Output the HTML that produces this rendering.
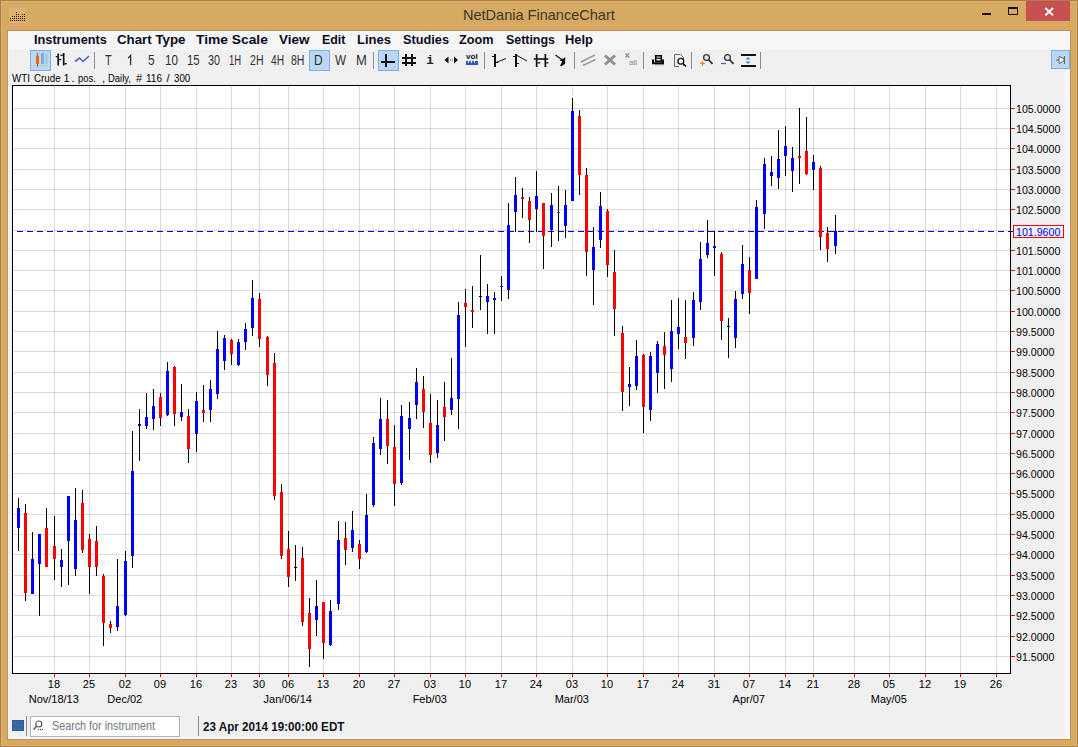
<!DOCTYPE html>
<html><head><meta charset="utf-8"><title>NetDania FinanceChart</title>
<style>
html,body{margin:0;padding:0}
body{width:1078px;height:747px;position:relative;overflow:hidden;background:#D6AA63;font-family:"Liberation Sans",sans-serif;}
.a{position:absolute}
.t{position:absolute;white-space:nowrap;line-height:1;transform-origin:0 0}
.menu{font-weight:bold;font-size:13px;color:#0b0b1f;top:33px}
.tb{font-size:14px;color:#303030;top:53px}
.ax{font-size:11px;color:#000}
.sep{position:absolute;width:1px;background:#8c8c8c;top:52px;height:17px}
.sel{position:absolute;box-sizing:border-box;background:#b9d7f6;border:1px solid #7eb0e6}
</style></head><body>

<div class="a" style="left:0;top:0;width:1078px;height:747px;box-sizing:border-box;border:1px solid #ab7f47"></div>
<div class="a" style="left:1px;top:1px;width:1076px;height:745px;box-sizing:border-box;border:1px solid #dcb171"></div>
<div class="a" style="left:8px;top:31px;width:1062px;height:708px;background:#F0F0F0"></div>
<div class="a" style="left:8px;top:31px;width:1062px;height:19px;background:#F6F6F6"></div>
<div class="a" style="left:1065px;top:31px;width:5px;height:708px;background:#f5f4fa"></div>
<div class="a" style="left:8px;top:736px;width:1062px;height:3px;background:#f4f4f9"></div>
<div class="a" style="left:8px;top:50px;width:1px;height:689px;background:#f6f7fb"></div>
<div class="a" style="left:7px;top:30px;width:1064px;height:710px;box-sizing:border-box;border:1px solid #bd9460"></div>
<div class="a" style="left:8px;top:27px;width:1062px;height:3px;background:#e0a45c"></div>
<svg class="a" style="left:8px;top:8px" width="26" height="16" viewBox="0 0 26 16" shape-rendering="crispEdges">
<rect x="1" y="0" width="16" height="15" fill="#e3c23c" opacity="0.5"></rect><rect x="17" y="0" width="6" height="15" fill="#e8b060" opacity="0.35"></rect>
<rect x="2" y="0" width="1" height="1" fill="#e2a6e2"></rect>
<rect x="4" y="0" width="1" height="1" fill="#e2a6e2"></rect>
<rect x="6" y="0" width="1" height="1" fill="#e2a6e2"></rect>
<rect x="8" y="0" width="1" height="1" fill="#e2a6e2"></rect>
<rect x="10" y="0" width="1" height="1" fill="#e2a6e2"></rect>
<rect x="12" y="0" width="1" height="1" fill="#e2a6e2"></rect>
<rect x="14" y="0" width="1" height="1" fill="#e2a6e2"></rect>
<rect x="16" y="0" width="1" height="1" fill="#e2a6e2"></rect>
<rect x="2" y="2" width="1" height="1" fill="#e2a6e2"></rect>
<rect x="4" y="2" width="1" height="1" fill="#e2a6e2"></rect>
<rect x="6" y="2" width="1" height="1" fill="#e2a6e2"></rect>
<rect x="8" y="2" width="1" height="1" fill="#e2a6e2"></rect>
<rect x="10" y="2" width="1" height="1" fill="#e2a6e2"></rect>
<rect x="12" y="2" width="1" height="1" fill="#e2a6e2"></rect>
<rect x="14" y="2" width="1" height="1" fill="#e2a6e2"></rect>
<rect x="16" y="2" width="1" height="1" fill="#e2a6e2"></rect>
<rect x="2" y="4" width="1" height="1" fill="#e2a6e2"></rect>
<rect x="4" y="4" width="1" height="1" fill="#e2a6e2"></rect>
<rect x="6" y="4" width="1" height="1" fill="#e2a6e2"></rect>
<rect x="8" y="4" width="1" height="1" fill="#2a0838"></rect>
<rect x="10" y="4" width="1" height="1" fill="#e2a6e2"></rect>
<rect x="12" y="4" width="1" height="1" fill="#e2a6e2"></rect>
<rect x="14" y="4" width="1" height="1" fill="#e2a6e2"></rect>
<rect x="16" y="4" width="1" height="1" fill="#e2a6e2"></rect>
<rect x="2" y="6" width="1" height="1" fill="#e2a6e2"></rect>
<rect x="4" y="6" width="1" height="1" fill="#e2a6e2"></rect>
<rect x="6" y="6" width="1" height="1" fill="#e2a6e2"></rect>
<rect x="8" y="6" width="1" height="1" fill="#2a0838"></rect>
<rect x="10" y="6" width="1" height="1" fill="#2a0838"></rect>
<rect x="12" y="6" width="1" height="1" fill="#e2a6e2"></rect>
<rect x="14" y="6" width="1" height="1" fill="#2a0838"></rect>
<rect x="16" y="6" width="1" height="1" fill="#2a0838"></rect>
<rect x="2" y="8" width="1" height="1" fill="#e2a6e2"></rect>
<rect x="4" y="8" width="1" height="1" fill="#2a0838"></rect>
<rect x="6" y="8" width="1" height="1" fill="#2a0838"></rect>
<rect x="8" y="8" width="1" height="1" fill="#2a0838"></rect>
<rect x="10" y="8" width="1" height="1" fill="#2a0838"></rect>
<rect x="12" y="8" width="1" height="1" fill="#2a0838"></rect>
<rect x="14" y="8" width="1" height="1" fill="#2a0838"></rect>
<rect x="16" y="8" width="1" height="1" fill="#2a0838"></rect>
<rect x="2" y="10" width="1" height="1" fill="#2a0838"></rect>
<rect x="4" y="10" width="1" height="1" fill="#2a0838"></rect>
<rect x="6" y="10" width="1" height="1" fill="#2a0838"></rect>
<rect x="8" y="10" width="1" height="1" fill="#2a0838"></rect>
<rect x="10" y="10" width="1" height="1" fill="#2a0838"></rect>
<rect x="12" y="10" width="1" height="1" fill="#2a0838"></rect>
<rect x="14" y="10" width="1" height="1" fill="#2a0838"></rect>
<rect x="16" y="10" width="1" height="1" fill="#2a0838"></rect>
<rect x="2" y="12" width="1" height="1" fill="#2a0838"></rect>
<rect x="4" y="12" width="1" height="1" fill="#2a0838"></rect>
<rect x="6" y="12" width="1" height="1" fill="#2a0838"></rect>
<rect x="8" y="12" width="1" height="1" fill="#2a0838"></rect>
<rect x="10" y="12" width="1" height="1" fill="#2a0838"></rect>
<rect x="12" y="12" width="1" height="1" fill="#2a0838"></rect>
<rect x="14" y="12" width="1" height="1" fill="#2a0838"></rect>
<rect x="16" y="12" width="1" height="1" fill="#2a0838"></rect>
<rect x="2" y="14" width="1" height="1" fill="#e2a6e2"></rect>
<rect x="4" y="14" width="1" height="1" fill="#e2a6e2"></rect>
<rect x="6" y="14" width="1" height="1" fill="#e2a6e2"></rect>
<rect x="8" y="14" width="1" height="1" fill="#e2a6e2"></rect>
<rect x="10" y="14" width="1" height="1" fill="#e2a6e2"></rect>
<rect x="12" y="14" width="1" height="1" fill="#e2a6e2"></rect>
<rect x="14" y="14" width="1" height="1" fill="#e2a6e2"></rect>
<rect x="16" y="14" width="1" height="1" fill="#e2a6e2"></rect>
</svg>
<div class="t" style="left: 462.73px; top: 7px; font-size: 15px; color: rgb(61, 53, 42); transform: scaleX(0.9682);">NetDania FinanceChart</div>
<div class="a" style="left:982px;top:13px;width:9px;height:2px;background:#1a1208"></div>
<div class="a" style="left:1008px;top:7px;width:10px;height:8px;box-sizing:border-box;border:1px solid #1a1208;border-top-width:2px"></div>
<div class="a" style="left:1026px;top:1px;width:44px;height:20px;background:#c75050"></div>
<svg class="a" style="left:1041px;top:5px" width="16" height="13" viewBox="0 0 16 13"><path d="M4.4 3 L12 10.4 M12 3 L4.4 10.4" stroke="#fff" stroke-width="2" fill="none"></path></svg>
<div class="t menu" style="left: 33.7px; transform: scaleX(0.9788);">Instruments</div>
<div class="t menu" style="left: 116.9px; transform: scaleX(1.0224);">Chart Type</div>
<div class="t menu" style="left: 195.5px; transform: scaleX(1.0613);">Time Scale</div>
<div class="t menu" style="left: 279.2px; transform: scaleX(1.0338);">View</div>
<div class="t menu" style="left: 321.9px; transform: scaleX(0.9555);">Edit</div>
<div class="t menu" style="left: 356.9px; transform: scaleX(0.9993);">Lines</div>
<div class="t menu" style="left: 402.7px; transform: scaleX(0.9802);">Studies</div>
<div class="t menu" style="left: 458.9px; transform: scaleX(0.9764);">Zoom</div>
<div class="t menu" style="left: 505.5px; transform: scaleX(0.9539);">Settings</div>
<div class="t menu" style="left: 565px; transform: scaleX(0.9883);">Help</div>
<div class="sel" style="left:30px;top:50px;width:21px;height:21px"></div>
<div class="sel" style="left:309px;top:50px;width:21px;height:21px"></div>
<div class="sel" style="left:378px;top:50px;width:21px;height:21px"></div>
<div class="sel" style="left:1051px;top:50px;width:19px;height:19px"></div>
<div class="sep" style="left:94px"></div>
<div class="sep" style="left:373px"></div>
<div class="sep" style="left:484px"></div>
<div class="sep" style="left:574px"></div>
<div class="sep" style="left:643px"></div>
<div class="sep" style="left:691px"></div>
<div class="sep" style="left:760px"></div>
<div class="t tb" style="left: 104.8px; transform: scaleX(0.7889);">T</div>
<div class="t tb" style="left: 147.7px; transform: scaleX(0.85);">5</div>
<div class="t tb" style="left: 165.17px; transform: scaleX(0.8319);">10</div>
<div class="t tb" style="left: 186.59px; transform: scaleX(0.8116);">15</div>
<div class="t tb" style="left: 207.8px; transform: scaleX(0.7728);">30</div>
<div class="t tb" style="left: 228.52px; transform: scaleX(0.6778);">1H</div>
<div class="t tb" style="left: 249.6px; transform: scaleX(0.7566);">2H</div>
<div class="t tb" style="left: 270.5px; transform: scaleX(0.7327);">4H</div>
<div class="t tb" style="left: 291.4px; transform: scaleX(0.7506);">8H</div>
<div class="t tb" style="left: 314.44px; transform: scaleX(0.8556);">D</div>
<div class="t tb" style="left: 334.7px; transform: scaleX(0.8357);">W</div>
<div class="t tb" style="left: 356.07px; transform: scaleX(0.93);">M</div>
<svg class="a" style="left:0;top:46px" width="1078" height="30" viewBox="0 46 1078 30">
<g shape-rendering="crispEdges"><rect x="37" y="53" width="1" height="14" fill="#c8400a"></rect><rect x="36" y="56" width="3" height="8" fill="#ff6000"></rect><rect x="41" y="53" width="3" height="11" fill="#86a9d3"></rect><rect x="45" y="54" width="3" height="10" fill="#a9c6ea"></rect><rect x="39" y="65" width="9" height="1" fill="#a8d0c0"></rect></g><g fill="#111"><rect x="57.4" y="53.5" width="1.6" height="12"></rect><rect x="55.8" y="56" width="2" height="1.2"></rect><rect x="59" y="59" width="2.2" height="1.2"></rect><rect x="62.9" y="53" width="1.6" height="12.5"></rect><rect x="60.4" y="54.6" width="2.6" height="1.2"></rect><rect x="64.4" y="63" width="2.3" height="1.4"></rect></g><path d="M75 61.5 L79.5 58 L83 61.5 L89 56" stroke="#4a63c0" stroke-width="1.6" fill="none"></path><path d="M128.2 58 L130.6 55.4 L130.6 65" stroke="#303030" stroke-width="1.3" fill="none" stroke-linejoin="miter"></path><g shape-rendering="crispEdges" fill="#111"><rect x="385" y="54" width="2" height="13"></rect><rect x="381" y="61" width="14" height="2"></rect></g><g shape-rendering="crispEdges" fill="#111"><rect x="405" y="54" width="2" height="12"></rect><rect x="411" y="54" width="2" height="12"></rect><rect x="402" y="57" width="14" height="2"></rect><rect x="402" y="62" width="14" height="2"></rect></g><path d="M444.5 60 L448.5 56.5 L448.5 63.5 Z M458 60 L454 56.5 L454 63.5 Z" fill="#111"></path><rect x="450" y="59.5" width="1" height="1" fill="#555"></rect><rect x="452" y="59.5" width="1" height="1" fill="#555"></rect><g shape-rendering="crispEdges"><rect x="466" y="61" width="12" height="4" fill="#2f55b5"></rect><rect x="468" y="61" width="1" height="2" fill="#dfe8ff"></rect><rect x="471" y="61" width="1" height="2" fill="#dfe8ff"></rect><rect x="474" y="61" width="1" height="2" fill="#dfe8ff"></rect></g><g shape-rendering="crispEdges" fill="#111"><rect x="494" y="54" width="2" height="13"></rect><rect x="492" y="56" width="2" height="1"></rect><rect x="496" y="62" width="2" height="1"></rect></g><path d="M496 62.5 L506 58.5" stroke="#111" stroke-width="1"></path><g shape-rendering="crispEdges" fill="#111"><rect x="515" y="54" width="2" height="13"></rect><rect x="513" y="56" width="2" height="1"></rect><rect x="517" y="63" width="2" height="1"></rect></g><path d="M517 55.5 L527 61" stroke="#111" stroke-width="1"></path><g fill="#111"><rect x="535.8" y="54" width="1.7" height="13"></rect><rect x="544.5" y="54" width="1.7" height="13"></rect><rect x="533.8" y="58.2" width="14.4" height="1.6"></rect><rect x="537.5" y="62.2" width="2.7" height="1.3"></rect><rect x="546.2" y="62.2" width="2.2" height="1.3"></rect></g><path d="M555.5 55 L563 60.5" stroke="#111" stroke-width="1.2"></path><path d="M565.3 57.2 L565 63.8 L561.5 66.3 L560 65.5 L562.3 61.5 L559.5 60.2 Z" fill="#111"></path><path d="M581 62 L595 55 M583 65.5 L595.5 59.5" stroke="#9a9a9a" stroke-width="1.4"></path><path d="M605 55.5 L615 64.5 M615 55.5 L605 64.5" stroke="#8f8f8f" stroke-width="3"></path><path d="M625.5 53.5 L629 57.5 M629 53.5 L625.5 57.5" stroke="#8f8f8f" stroke-width="1.3"></path><g><rect x="655.7" y="55.8" width="5.6" height="5.4" fill="#f4f4f4" stroke="#000" stroke-width="1.5"></rect><rect x="656" y="57.6" width="5" height="1.2" fill="#000"></rect><path d="M653 59.5 L653 63.2 L663 63.2 L663 59.5" fill="none" stroke="#000" stroke-width="2"></path><rect x="655" y="64.3" width="9" height="1" fill="#4a6aa8" opacity=".7"></rect></g><path d="M674.5 54.5 L680.5 54.5 L683.5 57.5 L683.5 66 M674.5 54.5 L674.5 66.5 L679 66.5" fill="none" stroke="#666" stroke-width="1"></path><circle cx="680.8" cy="61.2" r="2.9" fill="#fff" stroke="#111" stroke-width="1.3"></circle><path d="M683 63.5 L686 66.5" stroke="#111" stroke-width="1.6"></path><circle cx="706.5" cy="57.5" r="2.9" fill="#e8e8e8" stroke="#333" stroke-width="1.3"></circle><path d="M708.7 59.8 L712.5 63.8" stroke="#333" stroke-width="1.7"></path><path d="M700 63.5 L705 63.5 M702.5 61 L702.5 66" stroke="#ff7a00" stroke-width="1.2"></path><circle cx="727.5" cy="57.5" r="2.9" fill="#e8e8e8" stroke="#333" stroke-width="1.3"></circle><path d="M729.7 59.8 L733.5 63.8" stroke="#333" stroke-width="1.7"></path><path d="M721 63.5 L726 63.5" stroke="#3a66c8" stroke-width="1.2"></path><g shape-rendering="crispEdges" fill="#111"><rect x="741" y="54" width="15" height="2"></rect><rect x="741" y="65" width="15" height="2"></rect></g><path d="M748 57 L750.5 59.5 L745.5 59.5 Z M748 64 L750.5 61.5 L745.5 61.5 Z" fill="#4a7fd0"></path><path d="M1056 60 L1059 60 M1059 56.5 L1059 63.5 L1064 61 L1064 58.5 Z M1064.5 56 L1064.5 64" fill="#f4f4f4" stroke="#666" stroke-width="1"></path>
</svg>
<div class="t" style="left:426.3px;top:55px;font-family:'Liberation Mono',monospace;font-size:12.5px;font-weight:bold;color:#222">i</div>
<div class="t" style="left: 466.4px; top: 53.2px; font-size: 7.5px; color: rgb(17, 17, 17); font-weight: bold; transform: scaleX(1.0974);">vol</div>
<div class="t" style="left: 629.2px; top: 58.8px; font-size: 7.5px; color: rgb(138, 138, 138); transform: scaleX(1.0845);">all</div>
<div class="t" style="left: 12.1px; top: 73px; font-size: 11px; color: rgb(0, 0, 0); transform: scaleX(0.8855);">WTI</div>
<div class="t" style="left: 34px; top: 73px; font-size: 11px; color: rgb(0, 0, 0); transform: scaleX(0.888);">Crude</div>
<div class="t" style="left:63.6px;top:73px;font-size:11px;color:#000">1</div>
<div class="t" style="left: 71.6px; top: 73px; font-size: 11px; color: rgb(0, 0, 0);">.</div>
<div class="t" style="left: 77.6px; top: 73px; font-size: 11px; color: rgb(0, 0, 0); transform: scaleX(0.8488);">pos.</div>
<div class="t" style="left:102.0px;top:73px;font-size:11px;color:#000">,</div>
<div class="t" style="left: 107.6px; top: 73px; font-size: 11px; color: rgb(0, 0, 0); transform: scaleX(0.8598);">Daily,</div>
<div class="t" style="left:136.0px;top:73px;font-size:11px;color:#000">#</div>
<div class="t" style="left: 146.4px; top: 73px; font-size: 11px; color: rgb(0, 0, 0); transform: scaleX(0.9185);">116</div>
<div class="t" style="left:166.6px;top:73px;font-size:11px;color:#000">/</div>
<div class="t" style="left: 174px; top: 73px; font-size: 11px; color: rgb(0, 0, 0); transform: scaleX(0.8884);">300</div>
<svg class="a" style="left:0;top:80px" width="1078" height="600" viewBox="0 80 1078 600" shape-rendering="crispEdges">
<rect x="12" y="85" width="999" height="589" fill="#000"></rect><rect x="13" y="86" width="997" height="587" fill="#fff"></rect>
<rect x="54" y="86" width="1" height="587" fill="#000" fill-opacity=".14"></rect><rect x="54" y="674" width="1" height="3" fill="#f00"></rect><rect x="89" y="86" width="1" height="587" fill="#000" fill-opacity=".14"></rect><rect x="89" y="674" width="1" height="3" fill="#f00"></rect><rect x="125" y="86" width="1" height="587" fill="#000" fill-opacity=".14"></rect><rect x="125" y="674" width="1" height="3" fill="#f00"></rect><rect x="160" y="86" width="1" height="587" fill="#000" fill-opacity=".14"></rect><rect x="160" y="674" width="1" height="3" fill="#f00"></rect><rect x="196" y="86" width="1" height="587" fill="#000" fill-opacity=".14"></rect><rect x="196" y="674" width="1" height="3" fill="#f00"></rect><rect x="231" y="86" width="1" height="587" fill="#000" fill-opacity=".14"></rect><rect x="231" y="674" width="1" height="3" fill="#f00"></rect><rect x="259" y="86" width="1" height="587" fill="#000" fill-opacity=".14"></rect><rect x="259" y="674" width="1" height="3" fill="#f00"></rect><rect x="288" y="86" width="1" height="587" fill="#000" fill-opacity=".14"></rect><rect x="288" y="674" width="1" height="3" fill="#f00"></rect><rect x="323" y="86" width="1" height="587" fill="#000" fill-opacity=".14"></rect><rect x="323" y="674" width="1" height="3" fill="#f00"></rect><rect x="359" y="86" width="1" height="587" fill="#000" fill-opacity=".14"></rect><rect x="359" y="674" width="1" height="3" fill="#f00"></rect><rect x="394" y="86" width="1" height="587" fill="#000" fill-opacity=".14"></rect><rect x="394" y="674" width="1" height="3" fill="#f00"></rect><rect x="430" y="86" width="1" height="587" fill="#000" fill-opacity=".14"></rect><rect x="430" y="674" width="1" height="3" fill="#f00"></rect><rect x="465" y="86" width="1" height="587" fill="#000" fill-opacity=".14"></rect><rect x="465" y="674" width="1" height="3" fill="#f00"></rect><rect x="501" y="86" width="1" height="587" fill="#000" fill-opacity=".14"></rect><rect x="501" y="674" width="1" height="3" fill="#f00"></rect><rect x="536" y="86" width="1" height="587" fill="#000" fill-opacity=".14"></rect><rect x="536" y="674" width="1" height="3" fill="#f00"></rect><rect x="572" y="86" width="1" height="587" fill="#000" fill-opacity=".14"></rect><rect x="572" y="674" width="1" height="3" fill="#f00"></rect><rect x="607" y="86" width="1" height="587" fill="#000" fill-opacity=".14"></rect><rect x="607" y="674" width="1" height="3" fill="#f00"></rect><rect x="643" y="86" width="1" height="587" fill="#000" fill-opacity=".14"></rect><rect x="643" y="674" width="1" height="3" fill="#f00"></rect><rect x="678" y="86" width="1" height="587" fill="#000" fill-opacity=".14"></rect><rect x="678" y="674" width="1" height="3" fill="#f00"></rect><rect x="714" y="86" width="1" height="587" fill="#000" fill-opacity=".14"></rect><rect x="714" y="674" width="1" height="3" fill="#f00"></rect><rect x="749" y="86" width="1" height="587" fill="#000" fill-opacity=".14"></rect><rect x="749" y="674" width="1" height="3" fill="#f00"></rect><rect x="785" y="86" width="1" height="587" fill="#000" fill-opacity=".14"></rect><rect x="785" y="674" width="1" height="3" fill="#f00"></rect><rect x="813" y="86" width="1" height="587" fill="#000" fill-opacity=".14"></rect><rect x="813" y="674" width="1" height="3" fill="#f00"></rect><rect x="854" y="86" width="1" height="587" fill="#000" fill-opacity=".14"></rect><rect x="854" y="674" width="1" height="3" fill="#f00"></rect><rect x="889" y="86" width="1" height="587" fill="#000" fill-opacity=".14"></rect><rect x="889" y="674" width="1" height="3" fill="#f00"></rect><rect x="925" y="86" width="1" height="587" fill="#000" fill-opacity=".14"></rect><rect x="925" y="674" width="1" height="3" fill="#f00"></rect><rect x="960" y="86" width="1" height="587" fill="#000" fill-opacity=".14"></rect><rect x="960" y="674" width="1" height="3" fill="#f00"></rect><rect x="996" y="86" width="1" height="587" fill="#000" fill-opacity=".14"></rect><rect x="996" y="674" width="1" height="3" fill="#f00"></rect><rect x="13" y="108" width="997" height="1" fill="#000" fill-opacity=".14"></rect><rect x="1011" y="108" width="4" height="1" fill="#f00"></rect><rect x="13" y="128" width="997" height="1" fill="#000" fill-opacity=".14"></rect><rect x="1011" y="128" width="4" height="1" fill="#f00"></rect><rect x="13" y="148" width="997" height="1" fill="#000" fill-opacity=".14"></rect><rect x="1011" y="148" width="4" height="1" fill="#f00"></rect><rect x="13" y="169" width="997" height="1" fill="#000" fill-opacity=".14"></rect><rect x="1011" y="169" width="4" height="1" fill="#f00"></rect><rect x="13" y="189" width="997" height="1" fill="#000" fill-opacity=".14"></rect><rect x="1011" y="189" width="4" height="1" fill="#f00"></rect><rect x="13" y="209" width="997" height="1" fill="#000" fill-opacity=".14"></rect><rect x="1011" y="209" width="4" height="1" fill="#f00"></rect><rect x="13" y="230" width="997" height="1" fill="#000" fill-opacity=".14"></rect><rect x="13" y="250" width="997" height="1" fill="#000" fill-opacity=".14"></rect><rect x="1011" y="250" width="4" height="1" fill="#f00"></rect><rect x="13" y="270" width="997" height="1" fill="#000" fill-opacity=".14"></rect><rect x="1011" y="270" width="4" height="1" fill="#f00"></rect><rect x="13" y="290" width="997" height="1" fill="#000" fill-opacity=".14"></rect><rect x="1011" y="290" width="4" height="1" fill="#f00"></rect><rect x="13" y="311" width="997" height="1" fill="#000" fill-opacity=".14"></rect><rect x="1011" y="311" width="4" height="1" fill="#f00"></rect><rect x="13" y="331" width="997" height="1" fill="#000" fill-opacity=".14"></rect><rect x="1011" y="331" width="4" height="1" fill="#f00"></rect><rect x="13" y="351" width="997" height="1" fill="#000" fill-opacity=".14"></rect><rect x="1011" y="351" width="4" height="1" fill="#f00"></rect><rect x="13" y="372" width="997" height="1" fill="#000" fill-opacity=".14"></rect><rect x="1011" y="372" width="4" height="1" fill="#f00"></rect><rect x="13" y="392" width="997" height="1" fill="#000" fill-opacity=".14"></rect><rect x="1011" y="392" width="4" height="1" fill="#f00"></rect><rect x="13" y="412" width="997" height="1" fill="#000" fill-opacity=".14"></rect><rect x="1011" y="412" width="4" height="1" fill="#f00"></rect><rect x="13" y="433" width="997" height="1" fill="#000" fill-opacity=".14"></rect><rect x="1011" y="433" width="4" height="1" fill="#f00"></rect><rect x="13" y="453" width="997" height="1" fill="#000" fill-opacity=".14"></rect><rect x="1011" y="453" width="4" height="1" fill="#f00"></rect><rect x="13" y="473" width="997" height="1" fill="#000" fill-opacity=".14"></rect><rect x="1011" y="473" width="4" height="1" fill="#f00"></rect><rect x="13" y="493" width="997" height="1" fill="#000" fill-opacity=".14"></rect><rect x="1011" y="493" width="4" height="1" fill="#f00"></rect><rect x="13" y="514" width="997" height="1" fill="#000" fill-opacity=".14"></rect><rect x="1011" y="514" width="4" height="1" fill="#f00"></rect><rect x="13" y="534" width="997" height="1" fill="#000" fill-opacity=".14"></rect><rect x="1011" y="534" width="4" height="1" fill="#f00"></rect><rect x="13" y="554" width="997" height="1" fill="#000" fill-opacity=".14"></rect><rect x="1011" y="554" width="4" height="1" fill="#f00"></rect><rect x="13" y="575" width="997" height="1" fill="#000" fill-opacity=".14"></rect><rect x="1011" y="575" width="4" height="1" fill="#f00"></rect><rect x="13" y="595" width="997" height="1" fill="#000" fill-opacity=".14"></rect><rect x="1011" y="595" width="4" height="1" fill="#f00"></rect><rect x="13" y="615" width="997" height="1" fill="#000" fill-opacity=".14"></rect><rect x="1011" y="615" width="4" height="1" fill="#f00"></rect><rect x="13" y="636" width="997" height="1" fill="#000" fill-opacity=".14"></rect><rect x="1011" y="636" width="4" height="1" fill="#f00"></rect><rect x="13" y="656" width="997" height="1" fill="#000" fill-opacity=".14"></rect><rect x="1011" y="656" width="4" height="1" fill="#f00"></rect><rect x="17" y="231" width="6" height="1" fill="#0000ff"></rect><rect x="27" y="231" width="6" height="1" fill="#0000ff"></rect><rect x="37" y="231" width="6" height="1" fill="#0000ff"></rect><rect x="47" y="231" width="6" height="1" fill="#0000ff"></rect><rect x="57" y="231" width="6" height="1" fill="#0000ff"></rect><rect x="67" y="231" width="6" height="1" fill="#0000ff"></rect><rect x="77" y="231" width="6" height="1" fill="#0000ff"></rect><rect x="87" y="231" width="6" height="1" fill="#0000ff"></rect><rect x="97" y="231" width="6" height="1" fill="#0000ff"></rect><rect x="107" y="231" width="6" height="1" fill="#0000ff"></rect><rect x="117" y="231" width="6" height="1" fill="#0000ff"></rect><rect x="127" y="231" width="6" height="1" fill="#0000ff"></rect><rect x="137" y="231" width="6" height="1" fill="#0000ff"></rect><rect x="147" y="231" width="6" height="1" fill="#0000ff"></rect><rect x="157" y="231" width="6" height="1" fill="#0000ff"></rect><rect x="167" y="231" width="6" height="1" fill="#0000ff"></rect><rect x="177" y="231" width="6" height="1" fill="#0000ff"></rect><rect x="187" y="231" width="6" height="1" fill="#0000ff"></rect><rect x="197" y="231" width="6" height="1" fill="#0000ff"></rect><rect x="207" y="231" width="6" height="1" fill="#0000ff"></rect><rect x="218" y="231" width="6" height="1" fill="#0000ff"></rect><rect x="228" y="231" width="6" height="1" fill="#0000ff"></rect><rect x="238" y="231" width="6" height="1" fill="#0000ff"></rect><rect x="248" y="231" width="6" height="1" fill="#0000ff"></rect><rect x="258" y="231" width="6" height="1" fill="#0000ff"></rect><rect x="268" y="231" width="6" height="1" fill="#0000ff"></rect><rect x="278" y="231" width="6" height="1" fill="#0000ff"></rect><rect x="288" y="231" width="6" height="1" fill="#0000ff"></rect><rect x="298" y="231" width="6" height="1" fill="#0000ff"></rect><rect x="308" y="231" width="6" height="1" fill="#0000ff"></rect><rect x="318" y="231" width="6" height="1" fill="#0000ff"></rect><rect x="328" y="231" width="6" height="1" fill="#0000ff"></rect><rect x="338" y="231" width="6" height="1" fill="#0000ff"></rect><rect x="348" y="231" width="6" height="1" fill="#0000ff"></rect><rect x="358" y="231" width="6" height="1" fill="#0000ff"></rect><rect x="368" y="231" width="6" height="1" fill="#0000ff"></rect><rect x="378" y="231" width="6" height="1" fill="#0000ff"></rect><rect x="388" y="231" width="6" height="1" fill="#0000ff"></rect><rect x="398" y="231" width="6" height="1" fill="#0000ff"></rect><rect x="408" y="231" width="6" height="1" fill="#0000ff"></rect><rect x="418" y="231" width="6" height="1" fill="#0000ff"></rect><rect x="428" y="231" width="6" height="1" fill="#0000ff"></rect><rect x="438" y="231" width="6" height="1" fill="#0000ff"></rect><rect x="448" y="231" width="6" height="1" fill="#0000ff"></rect><rect x="458" y="231" width="6" height="1" fill="#0000ff"></rect><rect x="468" y="231" width="6" height="1" fill="#0000ff"></rect><rect x="478" y="231" width="6" height="1" fill="#0000ff"></rect><rect x="488" y="231" width="6" height="1" fill="#0000ff"></rect><rect x="498" y="231" width="6" height="1" fill="#0000ff"></rect><rect x="508" y="231" width="6" height="1" fill="#0000ff"></rect><rect x="518" y="231" width="6" height="1" fill="#0000ff"></rect><rect x="528" y="231" width="6" height="1" fill="#0000ff"></rect><rect x="538" y="231" width="6" height="1" fill="#0000ff"></rect><rect x="548" y="231" width="6" height="1" fill="#0000ff"></rect><rect x="558" y="231" width="6" height="1" fill="#0000ff"></rect><rect x="568" y="231" width="6" height="1" fill="#0000ff"></rect><rect x="578" y="231" width="6" height="1" fill="#0000ff"></rect><rect x="588" y="231" width="6" height="1" fill="#0000ff"></rect><rect x="598" y="231" width="6" height="1" fill="#0000ff"></rect><rect x="608" y="231" width="6" height="1" fill="#0000ff"></rect><rect x="618" y="231" width="6" height="1" fill="#0000ff"></rect><rect x="628" y="231" width="6" height="1" fill="#0000ff"></rect><rect x="638" y="231" width="6" height="1" fill="#0000ff"></rect><rect x="648" y="231" width="6" height="1" fill="#0000ff"></rect><rect x="658" y="231" width="6" height="1" fill="#0000ff"></rect><rect x="668" y="231" width="6" height="1" fill="#0000ff"></rect><rect x="678" y="231" width="6" height="1" fill="#0000ff"></rect><rect x="688" y="231" width="6" height="1" fill="#0000ff"></rect><rect x="698" y="231" width="6" height="1" fill="#0000ff"></rect><rect x="708" y="231" width="6" height="1" fill="#0000ff"></rect><rect x="718" y="231" width="6" height="1" fill="#0000ff"></rect><rect x="728" y="231" width="6" height="1" fill="#0000ff"></rect><rect x="738" y="231" width="6" height="1" fill="#0000ff"></rect><rect x="748" y="231" width="6" height="1" fill="#0000ff"></rect><rect x="758" y="231" width="6" height="1" fill="#0000ff"></rect><rect x="768" y="231" width="6" height="1" fill="#0000ff"></rect><rect x="778" y="231" width="6" height="1" fill="#0000ff"></rect><rect x="788" y="231" width="6" height="1" fill="#0000ff"></rect><rect x="798" y="231" width="6" height="1" fill="#0000ff"></rect><rect x="808" y="231" width="6" height="1" fill="#0000ff"></rect><rect x="818" y="231" width="6" height="1" fill="#0000ff"></rect><rect x="828" y="231" width="6" height="1" fill="#0000ff"></rect><rect x="838" y="231" width="6" height="1" fill="#0000ff"></rect><rect x="848" y="231" width="6" height="1" fill="#0000ff"></rect><rect x="858" y="231" width="6" height="1" fill="#0000ff"></rect><rect x="868" y="231" width="6" height="1" fill="#0000ff"></rect><rect x="878" y="231" width="6" height="1" fill="#0000ff"></rect><rect x="888" y="231" width="6" height="1" fill="#0000ff"></rect><rect x="898" y="231" width="6" height="1" fill="#0000ff"></rect><rect x="908" y="231" width="6" height="1" fill="#0000ff"></rect><rect x="918" y="231" width="6" height="1" fill="#0000ff"></rect><rect x="928" y="231" width="6" height="1" fill="#0000ff"></rect><rect x="938" y="231" width="6" height="1" fill="#0000ff"></rect><rect x="948" y="231" width="6" height="1" fill="#0000ff"></rect><rect x="958" y="231" width="6" height="1" fill="#0000ff"></rect><rect x="968" y="231" width="6" height="1" fill="#0000ff"></rect><rect x="978" y="231" width="6" height="1" fill="#0000ff"></rect><rect x="988" y="231" width="6" height="1" fill="#0000ff"></rect><rect x="998" y="231" width="6" height="1" fill="#0000ff"></rect><rect x="1008" y="231" width="5" height="1" fill="#0000ff"></rect><rect x="1010" y="85" width="1" height="589" fill="#000"></rect><rect x="18" y="498" width="1" height="53" fill="#000"></rect><rect x="17" y="508" width="3" height="20" fill="#0000ff"></rect><rect x="25" y="504" width="1" height="97" fill="#000"></rect><rect x="24" y="513" width="3" height="80" fill="#ff0000"></rect><rect x="32" y="532" width="1" height="62" fill="#000"></rect><rect x="31" y="559" width="3" height="35" fill="#0000ff"></rect><rect x="39" y="534" width="1" height="82" fill="#000"></rect><rect x="38" y="534" width="3" height="30" fill="#0000ff"></rect><rect x="46" y="508" width="1" height="59" fill="#000"></rect><rect x="45" y="528" width="3" height="39" fill="#ff0000"></rect><rect x="54" y="516" width="1" height="64" fill="#000"></rect><rect x="53" y="546" width="3" height="13" fill="#ff0000"></rect><rect x="61" y="549" width="1" height="38" fill="#000"></rect><rect x="60" y="560" width="3" height="7" fill="#0000ff"></rect><rect x="68" y="496" width="1" height="89" fill="#000"></rect><rect x="67" y="496" width="3" height="45" fill="#0000ff"></rect><rect x="75" y="488" width="1" height="88" fill="#000"></rect><rect x="74" y="520" width="3" height="49" fill="#0000ff"></rect><rect x="82" y="490" width="1" height="63" fill="#000"></rect><rect x="81" y="503" width="3" height="47" fill="#ff0000"></rect><rect x="89" y="534" width="1" height="60" fill="#000"></rect><rect x="88" y="539" width="3" height="28" fill="#ff0000"></rect><rect x="96" y="526" width="1" height="50" fill="#000"></rect><rect x="95" y="541" width="3" height="26" fill="#ff0000"></rect><rect x="103" y="574" width="1" height="72" fill="#000"></rect><rect x="102" y="576" width="3" height="47" fill="#ff0000"></rect><rect x="110" y="621" width="1" height="12" fill="#000"></rect><rect x="109" y="624" width="3" height="4" fill="#ff0000"></rect><rect x="117" y="559" width="1" height="72" fill="#000"></rect><rect x="116" y="606" width="3" height="21" fill="#0000ff"></rect><rect x="125" y="551" width="1" height="65" fill="#000"></rect><rect x="124" y="561" width="3" height="54" fill="#0000ff"></rect><rect x="132" y="431" width="1" height="137" fill="#000"></rect><rect x="131" y="471" width="3" height="85" fill="#0000ff"></rect><rect x="139" y="409" width="1" height="52" fill="#000"></rect><rect x="138" y="424" width="3" height="2" fill="#0000ff"></rect><rect x="146" y="393" width="1" height="36" fill="#000"></rect><rect x="145" y="417" width="3" height="9" fill="#0000ff"></rect><rect x="153" y="389" width="1" height="41" fill="#000"></rect><rect x="152" y="406" width="3" height="13" fill="#0000ff"></rect><rect x="160" y="393" width="1" height="33" fill="#000"></rect><rect x="159" y="397" width="3" height="21" fill="#ff0000"></rect><rect x="167" y="362" width="1" height="54" fill="#000"></rect><rect x="166" y="371" width="3" height="44" fill="#0000ff"></rect><rect x="174" y="366" width="1" height="60" fill="#000"></rect><rect x="173" y="367" width="3" height="47" fill="#ff0000"></rect><rect x="181" y="384" width="1" height="37" fill="#000"></rect><rect x="180" y="412" width="3" height="5" fill="#0000ff"></rect><rect x="188" y="409" width="1" height="54" fill="#000"></rect><rect x="187" y="416" width="3" height="33" fill="#ff0000"></rect><rect x="196" y="392" width="1" height="60" fill="#000"></rect><rect x="195" y="401" width="3" height="33" fill="#0000ff"></rect><rect x="203" y="385" width="1" height="37" fill="#000"></rect><rect x="202" y="410" width="3" height="3" fill="#ff0000"></rect><rect x="210" y="380" width="1" height="42" fill="#000"></rect><rect x="209" y="389" width="3" height="21" fill="#0000ff"></rect><rect x="217" y="331" width="1" height="68" fill="#000"></rect><rect x="216" y="349" width="3" height="45" fill="#0000ff"></rect><rect x="224" y="335" width="1" height="35" fill="#000"></rect><rect x="223" y="338" width="3" height="23" fill="#0000ff"></rect><rect x="231" y="339" width="1" height="26" fill="#000"></rect><rect x="230" y="340" width="3" height="14" fill="#ff0000"></rect><rect x="238" y="339" width="1" height="27" fill="#000"></rect><rect x="237" y="342" width="3" height="23" fill="#0000ff"></rect><rect x="245" y="323" width="1" height="27" fill="#000"></rect><rect x="244" y="329" width="3" height="13" fill="#0000ff"></rect><rect x="252" y="280" width="1" height="56" fill="#000"></rect><rect x="251" y="298" width="3" height="30" fill="#0000ff"></rect><rect x="259" y="293" width="1" height="54" fill="#000"></rect><rect x="258" y="299" width="3" height="40" fill="#ff0000"></rect><rect x="267" y="336" width="1" height="50" fill="#000"></rect><rect x="266" y="337" width="3" height="38" fill="#ff0000"></rect><rect x="274" y="353" width="1" height="147" fill="#000"></rect><rect x="273" y="363" width="3" height="133" fill="#ff0000"></rect><rect x="281" y="484" width="1" height="75" fill="#000"></rect><rect x="280" y="492" width="3" height="64" fill="#ff0000"></rect><rect x="288" y="531" width="1" height="56" fill="#000"></rect><rect x="287" y="549" width="3" height="28" fill="#ff0000"></rect><rect x="295" y="545" width="1" height="36" fill="#000"></rect><rect x="294" y="567" width="3" height="1" fill="#000"></rect><rect x="302" y="547" width="1" height="79" fill="#000"></rect><rect x="301" y="558" width="3" height="64" fill="#ff0000"></rect><rect x="309" y="598" width="1" height="69" fill="#000"></rect><rect x="308" y="613" width="3" height="36" fill="#ff0000"></rect><rect x="316" y="580" width="1" height="56" fill="#000"></rect><rect x="315" y="606" width="3" height="14" fill="#0000ff"></rect><rect x="323" y="602" width="1" height="57" fill="#000"></rect><rect x="322" y="602" width="3" height="41" fill="#ff0000"></rect><rect x="330" y="600" width="1" height="46" fill="#000"></rect><rect x="329" y="611" width="3" height="34" fill="#0000ff"></rect><rect x="338" y="521" width="1" height="89" fill="#000"></rect><rect x="337" y="540" width="3" height="64" fill="#0000ff"></rect><rect x="345" y="522" width="1" height="43" fill="#000"></rect><rect x="344" y="538" width="3" height="12" fill="#ff0000"></rect><rect x="352" y="511" width="1" height="41" fill="#000"></rect><rect x="351" y="530" width="3" height="18" fill="#0000ff"></rect><rect x="359" y="540" width="1" height="29" fill="#000"></rect><rect x="358" y="544" width="3" height="15" fill="#ff0000"></rect><rect x="366" y="494" width="1" height="59" fill="#000"></rect><rect x="365" y="515" width="3" height="37" fill="#0000ff"></rect><rect x="373" y="437" width="1" height="70" fill="#000"></rect><rect x="372" y="443" width="3" height="62" fill="#0000ff"></rect><rect x="380" y="398" width="1" height="57" fill="#000"></rect><rect x="379" y="419" width="3" height="30" fill="#0000ff"></rect><rect x="387" y="400" width="1" height="64" fill="#000"></rect><rect x="386" y="419" width="3" height="27" fill="#ff0000"></rect><rect x="394" y="425" width="1" height="81" fill="#000"></rect><rect x="393" y="447" width="3" height="37" fill="#ff0000"></rect><rect x="401" y="405" width="1" height="80" fill="#000"></rect><rect x="400" y="416" width="3" height="67" fill="#0000ff"></rect><rect x="409" y="402" width="1" height="58" fill="#000"></rect><rect x="408" y="418" width="3" height="11" fill="#0000ff"></rect><rect x="416" y="368" width="1" height="51" fill="#000"></rect><rect x="415" y="382" width="3" height="23" fill="#0000ff"></rect><rect x="423" y="376" width="1" height="52" fill="#000"></rect><rect x="422" y="389" width="3" height="23" fill="#ff0000"></rect><rect x="430" y="394" width="1" height="69" fill="#000"></rect><rect x="429" y="423" width="3" height="32" fill="#ff0000"></rect><rect x="437" y="400" width="1" height="58" fill="#000"></rect><rect x="436" y="425" width="3" height="28" fill="#0000ff"></rect><rect x="444" y="382" width="1" height="59" fill="#000"></rect><rect x="443" y="407" width="3" height="10" fill="#ff0000"></rect><rect x="451" y="358" width="1" height="57" fill="#000"></rect><rect x="450" y="398" width="3" height="12" fill="#0000ff"></rect><rect x="458" y="302" width="1" height="127" fill="#000"></rect><rect x="457" y="315" width="3" height="84" fill="#0000ff"></rect><rect x="465" y="289" width="1" height="58" fill="#000"></rect><rect x="464" y="303" width="3" height="4" fill="#ff0000"></rect><rect x="472" y="286" width="1" height="42" fill="#000"></rect><rect x="471" y="310" width="3" height="2" fill="#ff0000"></rect><rect x="480" y="255" width="1" height="55" fill="#000"></rect><rect x="479" y="296" width="3" height="1" fill="#000"></rect><rect x="487" y="284" width="1" height="50" fill="#000"></rect><rect x="486" y="296" width="3" height="6" fill="#0000ff"></rect><rect x="494" y="292" width="1" height="42" fill="#000"></rect><rect x="493" y="298" width="3" height="2" fill="#0000ff"></rect><rect x="501" y="276" width="1" height="25" fill="#000"></rect><rect x="500" y="286" width="3" height="1" fill="#0000ff"></rect><rect x="508" y="203" width="1" height="96" fill="#000"></rect><rect x="507" y="225" width="3" height="65" fill="#0000ff"></rect><rect x="515" y="177" width="1" height="55" fill="#000"></rect><rect x="514" y="195" width="3" height="17" fill="#0000ff"></rect><rect x="522" y="188" width="1" height="30" fill="#000"></rect><rect x="521" y="197" width="3" height="2" fill="#ff0000"></rect><rect x="529" y="197" width="1" height="46" fill="#000"></rect><rect x="528" y="201" width="3" height="19" fill="#ff0000"></rect><rect x="536" y="171" width="1" height="61" fill="#000"></rect><rect x="535" y="196" width="3" height="13" fill="#0000ff"></rect><rect x="543" y="203" width="1" height="66" fill="#000"></rect><rect x="542" y="203" width="3" height="33" fill="#ff0000"></rect><rect x="551" y="193" width="1" height="54" fill="#000"></rect><rect x="550" y="205" width="3" height="25" fill="#0000ff"></rect><rect x="558" y="186" width="1" height="55" fill="#000"></rect><rect x="557" y="212" width="3" height="1" fill="#ff0000"></rect><rect x="565" y="190" width="1" height="48" fill="#000"></rect><rect x="564" y="205" width="3" height="21" fill="#0000ff"></rect><rect x="572" y="98" width="1" height="103" fill="#000"></rect><rect x="571" y="111" width="3" height="90" fill="#0000ff"></rect><rect x="579" y="110" width="1" height="85" fill="#000"></rect><rect x="578" y="116" width="3" height="59" fill="#ff0000"></rect><rect x="586" y="168" width="1" height="108" fill="#000"></rect><rect x="585" y="175" width="3" height="77" fill="#ff0000"></rect><rect x="593" y="227" width="1" height="78" fill="#000"></rect><rect x="592" y="247" width="3" height="23" fill="#0000ff"></rect><rect x="600" y="192" width="1" height="56" fill="#000"></rect><rect x="599" y="206" width="3" height="34" fill="#0000ff"></rect><rect x="607" y="209" width="1" height="68" fill="#000"></rect><rect x="606" y="211" width="3" height="54" fill="#ff0000"></rect><rect x="614" y="250" width="1" height="86" fill="#000"></rect><rect x="613" y="272" width="3" height="37" fill="#ff0000"></rect><rect x="622" y="326" width="1" height="85" fill="#000"></rect><rect x="621" y="333" width="3" height="59" fill="#ff0000"></rect><rect x="629" y="367" width="1" height="39" fill="#000"></rect><rect x="628" y="384" width="3" height="3" fill="#0000ff"></rect><rect x="636" y="340" width="1" height="50" fill="#000"></rect><rect x="635" y="356" width="3" height="30" fill="#0000ff"></rect><rect x="643" y="354" width="1" height="79" fill="#000"></rect><rect x="642" y="355" width="3" height="52" fill="#ff0000"></rect><rect x="650" y="352" width="1" height="69" fill="#000"></rect><rect x="649" y="356" width="3" height="54" fill="#0000ff"></rect><rect x="657" y="341" width="1" height="52" fill="#000"></rect><rect x="656" y="344" width="3" height="29" fill="#0000ff"></rect><rect x="664" y="332" width="1" height="57" fill="#000"></rect><rect x="663" y="346" width="3" height="9" fill="#ff0000"></rect><rect x="671" y="300" width="1" height="82" fill="#000"></rect><rect x="670" y="331" width="3" height="38" fill="#0000ff"></rect><rect x="678" y="298" width="1" height="51" fill="#000"></rect><rect x="677" y="327" width="3" height="7" fill="#0000ff"></rect><rect x="685" y="300" width="1" height="59" fill="#000"></rect><rect x="684" y="337" width="3" height="6" fill="#ff0000"></rect><rect x="693" y="292" width="1" height="54" fill="#000"></rect><rect x="692" y="300" width="3" height="38" fill="#0000ff"></rect><rect x="700" y="242" width="1" height="68" fill="#000"></rect><rect x="699" y="259" width="3" height="43" fill="#0000ff"></rect><rect x="707" y="220" width="1" height="38" fill="#000"></rect><rect x="706" y="243" width="3" height="12" fill="#0000ff"></rect><rect x="714" y="231" width="1" height="45" fill="#000"></rect><rect x="713" y="246" width="3" height="2" fill="#0000ff"></rect><rect x="721" y="252" width="1" height="88" fill="#000"></rect><rect x="720" y="254" width="3" height="67" fill="#ff0000"></rect><rect x="728" y="318" width="1" height="40" fill="#000"></rect><rect x="727" y="326" width="3" height="1" fill="#000"></rect><rect x="735" y="291" width="1" height="57" fill="#000"></rect><rect x="734" y="299" width="3" height="39" fill="#0000ff"></rect><rect x="742" y="245" width="1" height="54" fill="#000"></rect><rect x="741" y="264" width="3" height="30" fill="#0000ff"></rect><rect x="749" y="257" width="1" height="57" fill="#000"></rect><rect x="748" y="270" width="3" height="23" fill="#ff0000"></rect><rect x="756" y="200" width="1" height="79" fill="#000"></rect><rect x="755" y="207" width="3" height="72" fill="#0000ff"></rect><rect x="764" y="158" width="1" height="71" fill="#000"></rect><rect x="763" y="164" width="3" height="50" fill="#0000ff"></rect><rect x="771" y="156" width="1" height="30" fill="#000"></rect><rect x="770" y="172" width="3" height="4" fill="#0000ff"></rect><rect x="778" y="130" width="1" height="59" fill="#000"></rect><rect x="777" y="159" width="3" height="19" fill="#0000ff"></rect><rect x="785" y="126" width="1" height="50" fill="#000"></rect><rect x="784" y="146" width="3" height="10" fill="#0000ff"></rect><rect x="792" y="147" width="1" height="45" fill="#000"></rect><rect x="791" y="158" width="3" height="13" fill="#0000ff"></rect><rect x="799" y="108" width="1" height="76" fill="#000"></rect><rect x="798" y="156" width="3" height="2" fill="#ff0000"></rect><rect x="806" y="117" width="1" height="58" fill="#000"></rect><rect x="805" y="151" width="3" height="23" fill="#ff0000"></rect><rect x="813" y="155" width="1" height="35" fill="#000"></rect><rect x="812" y="162" width="3" height="8" fill="#0000ff"></rect><rect x="820" y="166" width="1" height="84" fill="#000"></rect><rect x="819" y="168" width="3" height="69" fill="#ff0000"></rect><rect x="827" y="227" width="1" height="35" fill="#000"></rect><rect x="826" y="233" width="3" height="16" fill="#ff0000"></rect><rect x="835" y="215" width="1" height="39" fill="#000"></rect><rect x="834" y="231" width="3" height="15" fill="#0000ff"></rect>
<rect x="1013.5" y="225.5" width="50" height="12" fill="#F0F0F0" stroke="#f00" stroke-width="1"></rect>
</svg>
<div class="t ax" style="left: 1016.3px; top: 104px; transform: scaleX(0.9659);">105.0000</div>
<div class="t ax" style="left: 1016.3px; top: 124px; transform: scaleX(0.9659);">104.5000</div>
<div class="t ax" style="left: 1016.3px; top: 144px; transform: scaleX(0.9659);">104.0000</div>
<div class="t ax" style="left: 1016.3px; top: 165px; transform: scaleX(0.9659);">103.5000</div>
<div class="t ax" style="left: 1016.3px; top: 185px; transform: scaleX(0.9659);">103.0000</div>
<div class="t ax" style="left: 1016.3px; top: 205px; transform: scaleX(0.9659);">102.5000</div>
<div class="t ax" style="left: 1016.3px; top: 246px; transform: scaleX(0.9659);">101.5000</div>
<div class="t ax" style="left: 1016.3px; top: 266px; transform: scaleX(0.9659);">101.0000</div>
<div class="t ax" style="left: 1016.3px; top: 286px; transform: scaleX(0.9659);">100.5000</div>
<div class="t ax" style="left: 1016.3px; top: 307px; transform: scaleX(0.9659);">100.0000</div>
<div class="t ax" style="left: 1016.3px; top: 327px; transform: scaleX(0.9661);">99.5000</div>
<div class="t ax" style="left: 1016.3px; top: 347px; transform: scaleX(0.9661);">99.0000</div>
<div class="t ax" style="left: 1016.3px; top: 368px; transform: scaleX(0.9661);">98.5000</div>
<div class="t ax" style="left: 1016.3px; top: 388px; transform: scaleX(0.9661);">98.0000</div>
<div class="t ax" style="left: 1016.3px; top: 408px; transform: scaleX(0.9661);">97.5000</div>
<div class="t ax" style="left: 1016.3px; top: 429px; transform: scaleX(0.9661);">97.0000</div>
<div class="t ax" style="left: 1016.3px; top: 449px; transform: scaleX(0.9661);">96.5000</div>
<div class="t ax" style="left: 1016.3px; top: 469px; transform: scaleX(0.9661);">96.0000</div>
<div class="t ax" style="left: 1016.3px; top: 489px; transform: scaleX(0.9661);">95.5000</div>
<div class="t ax" style="left: 1016.3px; top: 510px; transform: scaleX(0.9661);">95.0000</div>
<div class="t ax" style="left: 1016.3px; top: 530px; transform: scaleX(0.9661);">94.5000</div>
<div class="t ax" style="left: 1016.3px; top: 550px; transform: scaleX(0.9661);">94.0000</div>
<div class="t ax" style="left: 1016.3px; top: 571px; transform: scaleX(0.9661);">93.5000</div>
<div class="t ax" style="left: 1016.3px; top: 591px; transform: scaleX(0.9661);">93.0000</div>
<div class="t ax" style="left: 1016.3px; top: 611px; transform: scaleX(0.9661);">92.5000</div>
<div class="t ax" style="left: 1016.3px; top: 632px; transform: scaleX(0.9661);">92.0000</div>
<div class="t ax" style="left: 1016.3px; top: 652px; transform: scaleX(0.9661);">91.5000</div>
<div class="t ax" style="left: 1016.3px; top: 227px; color: rgb(0, 0, 255); transform: scaleX(0.9659);">101.9600</div>
<div class="t ax" style="left: 47.84px; top: 679px;">18</div>
<div class="t ax" style="left: 82.84px; top: 679px;">25</div>
<div class="t ax" style="left: 118.84px; top: 679px;">02</div>
<div class="t ax" style="left: 153.84px; top: 679px;">09</div>
<div class="t ax" style="left: 189.84px; top: 679px;">16</div>
<div class="t ax" style="left: 224.84px; top: 679px;">23</div>
<div class="t ax" style="left: 252.84px; top: 679px;">30</div>
<div class="t ax" style="left: 281.84px; top: 679px;">06</div>
<div class="t ax" style="left: 316.84px; top: 679px;">13</div>
<div class="t ax" style="left: 352.84px; top: 679px;">20</div>
<div class="t ax" style="left: 387.84px; top: 679px;">27</div>
<div class="t ax" style="left: 423.84px; top: 679px;">03</div>
<div class="t ax" style="left: 458.84px; top: 679px;">10</div>
<div class="t ax" style="left: 494.84px; top: 679px;">17</div>
<div class="t ax" style="left: 529.84px; top: 679px;">24</div>
<div class="t ax" style="left: 565.84px; top: 679px;">03</div>
<div class="t ax" style="left: 600.84px; top: 679px;">10</div>
<div class="t ax" style="left: 636.84px; top: 679px;">17</div>
<div class="t ax" style="left: 671.84px; top: 679px;">24</div>
<div class="t ax" style="left: 707.84px; top: 679px;">31</div>
<div class="t ax" style="left: 742.84px; top: 679px;">07</div>
<div class="t ax" style="left: 778.84px; top: 679px;">14</div>
<div class="t ax" style="left: 806.84px; top: 679px;">21</div>
<div class="t ax" style="left: 847.84px; top: 679px;">28</div>
<div class="t ax" style="left: 882.84px; top: 679px;">05</div>
<div class="t ax" style="left: 918.84px; top: 679px;">12</div>
<div class="t ax" style="left: 953.84px; top: 679px;">19</div>
<div class="t ax" style="left: 989.84px; top: 679px;">26</div>
<div class="t ax" style="left: 28.69px; top: 694px;">Nov/18/13</div>
<div class="t ax" style="left: 107.33px; top: 694px;">Dec/02</div>
<div class="t ax" style="left: 263.6px; top: 694px;">Jan/06/14</div>
<div class="t ax" style="left: 412.64px; top: 694px;">Feb/03</div>
<div class="t ax" style="left: 554.64px; top: 694px;">Mar/03</div>
<div class="t ax" style="left: 732.55px; top: 694px;">Apr/07</div>
<div class="t ax" style="left: 870.72px; top: 694px;">May/05</div>
<div class="a" style="left:12px;top:720px;width:12px;height:11px;box-sizing:border-box;background:#3567a3;border:1px solid #2d5c94"></div>
<div class="a" style="left:26px;top:716px;width:1px;height:20px;background:#8c8c8c"></div>
<div class="a" style="left:30px;top:716px;width:150px;height:21px;box-sizing:border-box;background:#fff;border:1px solid #a9b3c9"></div>
<svg class="a" style="left:32px;top:719px" width="14" height="14" viewBox="0 0 14 14"><circle cx="6.8" cy="5" r="3" fill="none" stroke="#555" stroke-width="1.2"></circle><path d="M4.6 7.2 L1.5 10.5" stroke="#555" stroke-width="1.5"></path><rect x="6" y="10" width="1" height="1" fill="#333"></rect><rect x="8" y="10" width="1" height="1" fill="#333"></rect><rect x="10" y="10" width="1" height="1" fill="#333"></rect></svg>
<div class="t" style="left: 52px; top: 720px; font-size: 12px; color: rgb(114, 117, 127); transform: scaleX(0.897);">Search for instrument</div>
<div class="a" style="left:198px;top:716px;width:1px;height:20px;background:#8c8c8c"></div>
<div class="t" style="left: 202.6px; top: 720.5px; font-size: 12px; font-weight: bold; color: rgb(16, 16, 30); transform: scaleX(0.971);">23 Apr 2014 19:00:00 EDT</div>
</body></html>
